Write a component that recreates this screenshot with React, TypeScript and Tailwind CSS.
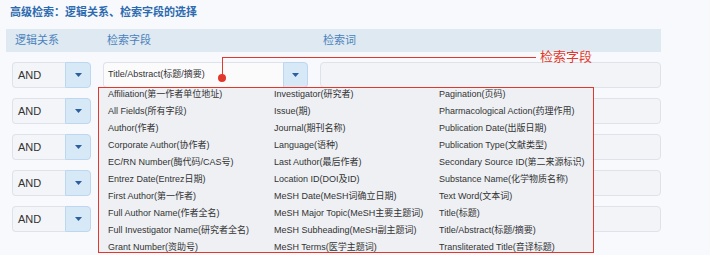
import React from "react";

const col1 = [
  "Affiliation(第一作者单位地址)",
  "All Fields(所有字段)",
  "Author(作者)",
  "Corporate Author(协作者)",
  "EC/RN Number(酶代码/CAS号)",
  "Entrez Date(Entrez日期)",
  "First Author(第一作者)",
  "Full Author Name(作者全名)",
  "Full Investigator Name(研究者全名)",
  "Grant Number(资助号)",
];
const col2 = [
  "Investigator(研究者)",
  "Issue(期)",
  "Journal(期刊名称)",
  "Language(语种)",
  "Last Author(最后作者)",
  "Location ID(DOI及ID)",
  "MeSH Date(MeSH词确立日期)",
  "MeSH Major Topic(MeSH主要主题词)",
  "MeSH Subheading(MeSH副主题词)",
  "MeSH Terms(医学主题词)",
];
const col3 = [
  "Pagination(页码)",
  "Pharmacological Action(药理作用)",
  "Publication Date(出版日期)",
  "Publication Type(文献类型)",
  "Secondary Source ID(第二来源标识)",
  "Substance Name(化学物质名称)",
  "Text Word(文本词)",
  "Title(标题)",
  "Title/Abstract(标题/摘要)",
  "Transliterated Title(音译标题)",
];

function Arrow() {
  return (
    <svg width="7" height="4" viewBox="0 0 7 4">
      <path d="M0 0 L7 0 L3.5 4 Z" fill="#2b5f9e" />
    </svg>
  );
}

function DropBtn({ w }: { w: string }) {
  return (
    <div
      className={`${w} h-[26px] bg-[#d7e8f7] border border-[#bcd7ef] rounded-r-[4px] flex items-center justify-center`}
    >
      <Arrow />
    </div>
  );
}

function Row({ first }: { first?: boolean }) {
  return (
    <div className="flex h-[26px] pl-[12px]">
      <div className="w-[53px] h-[26px] bg-[#f4f5f8] border border-[#dfe2e8] border-r-0 rounded-l-[4px] flex items-center pl-[5px] text-[11px] text-[#333]">
        AND
      </div>
      <DropBtn w="w-[26px]" />
      <div className="ml-[12px] w-[180px] h-[26px] bg-[#fbfbfc] border border-[#dfe2e8] border-r-0 rounded-l-[4px] flex items-center pl-[4px] text-[9px] text-[#333]">
        {first ? "Title/Abstract(标题/摘要)" : ""}
      </div>
      <DropBtn w="w-[25px]" />
      <div className="ml-[12px] w-[341px] h-[26px] bg-[#f3f4f8] border border-[#dfe2e8] rounded-[4px]" />
    </div>
  );
}

export default function App() {
  return (
    <div
      className="relative w-[710px] h-[255px] overflow-hidden bg-[#f8f9fc]"
      style={{ fontFamily: '"Liberation Sans", "Noto Sans CJK SC", sans-serif' }}
    >
      <div className="pt-[5px] pl-[10px] leading-[14px] text-[11px] font-bold text-[#2d6bb0]">
        高级检索：逻辑关系、检索字段的选择
      </div>
      <div className="mt-[10px] ml-[6px] w-[655px] h-[23px] bg-[#dfe9f1] flex items-center text-[11px] text-[#4a82bd]">
        <div className="w-[101px] pl-[9px]">逻辑关系</div>
        <div className="w-[216px]">检索字段</div>
        <div>检索词</div>
      </div>
      <div className="mt-[10px] flex flex-col gap-[10px]">
        <Row first />
        <Row />
        <Row />
        <Row />
        <Row />
      </div>

      {/* annotation */}
      <div className="absolute left-[222px] top-[57px] w-[1px] h-[21px] bg-[#e2382b]" />
      <div className="absolute left-[222px] top-[57px] w-[314px] h-[1px] bg-[#e2382b]" />
      <div className="absolute left-[218px] top-[74px] w-[8px] h-[8px] rounded-full bg-[#e2382b]" />
      <div className="absolute left-[540px] top-[49px] text-[13px] leading-[16px] text-[#e2382b]">
        检索字段
      </div>

      {/* dropdown */}
      <div className="absolute left-[98px] top-[87px] w-[496px] h-[166px] border border-[#e2382b] bg-[#eef0f4] overflow-hidden">
        <div className="-mt-[2px] pl-[9px] grid grid-cols-[166px_165px_1fr] text-[9px] text-[#333]">
          <div className="flex flex-col">
            {col1.map((t) => (
              <div key={t} className="h-[17px] leading-[17px] whitespace-nowrap">
                {t}
              </div>
            ))}
          </div>
          <div className="flex flex-col">
            {col2.map((t) => (
              <div key={t} className="h-[17px] leading-[17px] whitespace-nowrap">
                {t}
              </div>
            ))}
          </div>
          <div className="flex flex-col">
            {col3.map((t) => (
              <div key={t} className="h-[17px] leading-[17px] whitespace-nowrap">
                {t}
              </div>
            ))}
          </div>
        </div>
      </div>
    </div>
  );
}
